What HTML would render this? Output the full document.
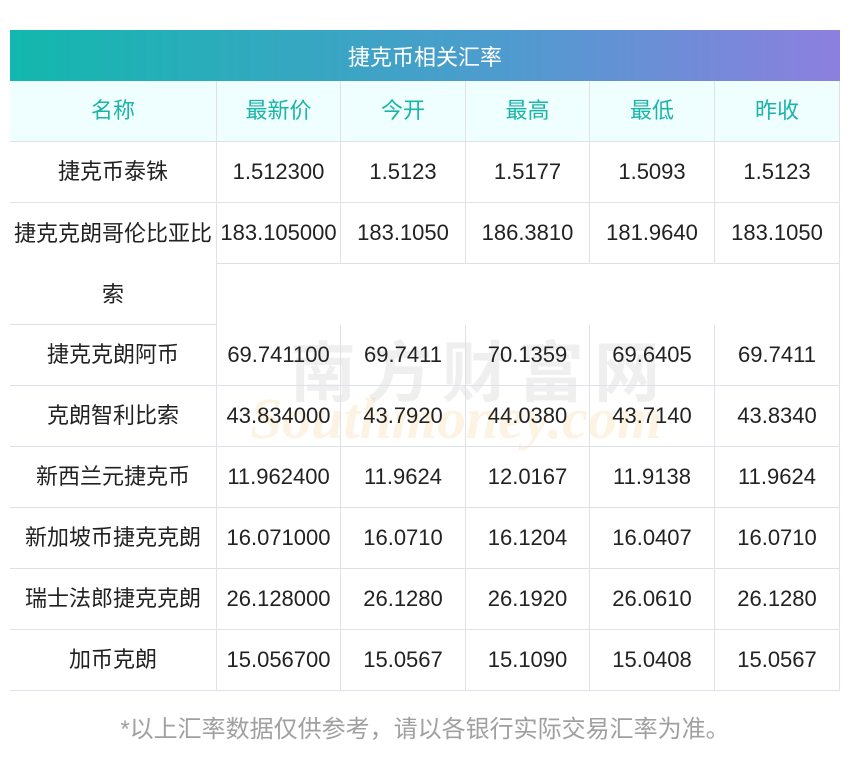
<!DOCTYPE html>
<html><head><meta charset="utf-8"><style>
body{margin:0;width:850px;height:757px;background:#fff;position:relative;overflow:hidden;font-family:"Liberation Sans","Noto Sans CJK SC",sans-serif;}
.c{position:absolute;box-sizing:border-box;display:flex;align-items:center;justify-content:center;font-size:22px;line-height:26px;color:#222;border-right:1px solid #dfe1ea;border-bottom:1px solid #dfe1ea;white-space:nowrap;}
.h{color:#1bb5a8;background:#effeff;}
.title{position:absolute;left:10px;top:30px;width:830px;height:51px;background:linear-gradient(90deg,#12b8ad,#4f9bcf 60%,#8d7fdf);color:#fff;font-size:22px;display:flex;align-items:center;justify-content:center;}
.wm{position:absolute;font-weight:bold;opacity:.08;white-space:nowrap;}
</style></head><body>
<div class="title">捷克币相关汇率</div>
<div class="wm" style="left:290px;top:320px;font-size:66px;color:#444;letter-spacing:10px;">南方财富网</div>
<div class="wm" style="left:250px;top:385px;font-size:58px;color:#f0a020;font-style:italic;font-family:'Liberation Serif',serif;opacity:.12">Southmoney.com</div>
<div id="t"></div>
<div style="position:absolute;left:0;width:850px;top:709px;text-align:center;font-size:24px;color:#a0a0a0;">*以上汇率数据仅供参考，请以各银行实际交易汇率为准。</div>
<script>
var xs=[10,217,341,466,590,715,840];
var rows=[["名称","最新价","今开","最高","最低","昨收"],
["捷克币泰铢","1.512300","1.5123","1.5177","1.5093","1.5123"],
["捷克克朗哥伦比亚比索","183.105000","183.1050","186.3810","181.9640","183.1050"],
["捷克克朗阿币","69.741100","69.7411","70.1359","69.6405","69.7411"],
["克朗智利比索","43.834000","43.7920","44.0380","43.7140","43.8340"],
["新西兰元捷克币","11.962400","11.9624","12.0167","11.9138","11.9624"],
["新加坡币捷克克朗","16.071000","16.0710","16.1204","16.0407","16.0710"],
["瑞士法郎捷克克朗","26.128000","26.1280","26.1920","26.0610","26.1280"],
["加币克朗","15.056700","15.0567","15.1090","15.0408","15.0567"]];
var tops=[81,142,203,325,386,447,508,569,630];
var h="";
rows.forEach(function(r,i){
 var y=tops[i];
 r.forEach(function(v,j){
  var hh=61;
  if(i==2&&j==0){hh=122;v='<span style="display:block;text-align:center;line-height:61px">捷克克朗哥伦比亚比<br>索</span>';}
  var st="left:"+xs[j]+"px;top:"+y+"px;width:"+(xs[j+1]-xs[j])+"px;height:"+hh+"px;";
  if(j==0&&i==2)st+="align-items:flex-start;";
  h+='<div class="c'+(i==0?' h':'')+'" style="'+st+'">'+v+'</div>';
 });
});
h+='<div style="position:absolute;left:839px;top:264px;width:1px;height:61px;background:#dfe1ea"></div>';
document.getElementById('t').innerHTML=h;
</script>
</body></html>
